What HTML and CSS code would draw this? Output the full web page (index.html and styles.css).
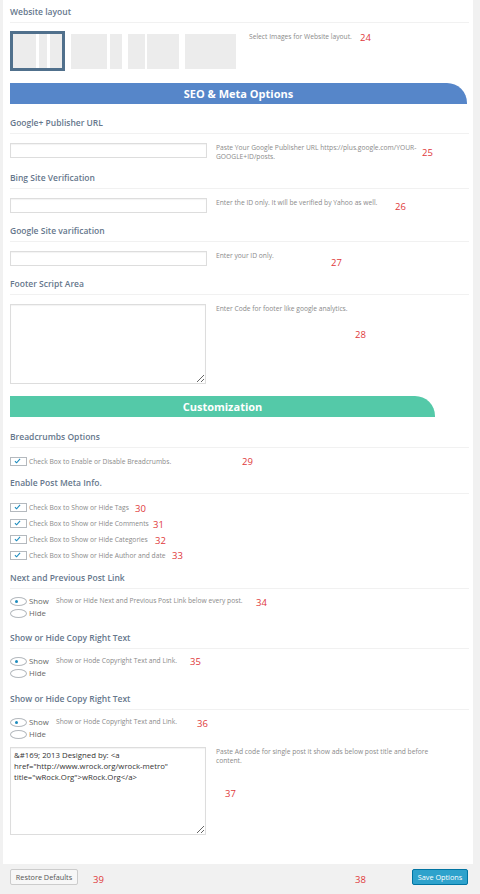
FILE: index.html
```html
<!DOCTYPE html>
<html lang="en">
<head>
    <meta charset="UTF-8">
    <meta name="viewport" content="width=device-width, initial-scale=1.0">
    <title>Theme Options</title>
    <link rel="stylesheet" href="styles.css">
</head>
<body>
    <div class="page">
        <div class="panel">
            <!-- Layout -->
            <div class="field field-layout">
                <div class="field-title">Website layout</div>
                <div class="field-row">
                    <div class="layouts">
                        <div class="layout selected l-1"><span></span><span></span><span></span></div>
                        <div class="layout l-2"><span></span><span></span></div>
                        <div class="layout l-3"><span></span><span></span></div>
                        <div class="layout l-4"><span></span></div>
                    </div>
                    <div class="desc desc-layout">Select Images for Website layout.</div>
                </div>
            </div>

            <div class="banner banner-seo">SEO &amp; Meta Options</div>

            <div class="field field-gplus">
                <div class="field-title">Google+ Publisher URL</div>
                <div class="field-row">
                    <div class="control"><input type="text" class="text-input"></div>
                    <div class="desc">Paste Your Google Publisher URL https://plus.google.com/YOUR-GOOGLE+ID/posts.</div>
                </div>
            </div>

            <div class="field">
                <div class="field-title">Bing Site Verification</div>
                <div class="field-row">
                    <div class="control"><input type="text" class="text-input"></div>
                    <div class="desc">Enter the ID only. It will be verified by Yahoo as well.</div>
                </div>
            </div>

            <div class="field">
                <div class="field-title">Google Site varification</div>
                <div class="field-row">
                    <div class="control"><input type="text" class="text-input"></div>
                    <div class="desc">Enter your ID only.</div>
                </div>
            </div>

            <div class="field field-footer-script">
                <div class="field-title">Footer Script Area</div>
                <div class="field-row">
                    <div class="control"><textarea class="text-area"></textarea></div>
                    <div class="desc">Enter Code for footer like google analytics.</div>
                </div>
            </div>

            <div class="banner banner-custom">Customization</div>

            <div class="field field-breadcrumbs">
                <div class="field-title compact">Breadcrumbs Options</div>
                <div class="check-row"><span class="checkbox"><svg viewBox="0 0 8 7" width="7" height="6"><path d="M1 3.8 L3 5.6 L7 1" fill="none" stroke="#1e8cbe" stroke-width="1.3"/></svg></span>Check Box to Enable or Disable Breadcrumbs.</div>
            </div>

            <div class="field field-meta">
                <div class="field-title compact">Enable Post Meta Info.</div>
                <div class="check-row"><span class="checkbox"><svg viewBox="0 0 8 7" width="7" height="6"><path d="M1 3.8 L3 5.6 L7 1" fill="none" stroke="#1e8cbe" stroke-width="1.3"/></svg></span>Check Box to Show or Hide Tags</div>
                <div class="check-row"><span class="checkbox"><svg viewBox="0 0 8 7" width="7" height="6"><path d="M1 3.8 L3 5.6 L7 1" fill="none" stroke="#1e8cbe" stroke-width="1.3"/></svg></span>Check Box to Show or Hide Comments</div>
                <div class="check-row"><span class="checkbox"><svg viewBox="0 0 8 7" width="7" height="6"><path d="M1 3.8 L3 5.6 L7 1" fill="none" stroke="#1e8cbe" stroke-width="1.3"/></svg></span>Check Box to Show or Hide Categories</div>
                <div class="check-row"><span class="checkbox"><svg viewBox="0 0 8 7" width="7" height="6"><path d="M1 3.8 L3 5.6 L7 1" fill="none" stroke="#1e8cbe" stroke-width="1.3"/></svg></span>Check Box to Show or Hide Author and date</div>
            </div>

            <div class="field field-radio">
                <div class="field-title radio-title">Next and Previous Post Link</div>
                <div class="radio-field">
                    <div class="radio-group">
                        <div class="radio-row"><span class="radio on"><i></i></span>Show</div>
                        <div class="radio-row"><span class="radio"></span>Hide</div>
                    </div>
                    <div class="desc desc-radio">Show or Hide Next and Previous Post Link below every post.</div>
                </div>
            </div>

            <div class="field field-radio field-copy">
                <div class="field-title radio-title">Show or Hide Copy Right Text</div>
                <div class="radio-field">
                    <div class="radio-group">
                        <div class="radio-row"><span class="radio on"><i></i></span>Show</div>
                        <div class="radio-row"><span class="radio"></span>Hide</div>
                    </div>
                    <div class="desc desc-radio">Show or Hode Copyright Text and Link.</div>
                </div>
            </div>

            <div class="field field-last">
                <div class="field-title radio-title">Show or Hide Copy Right Text</div>
                <div class="radio-field">
                    <div class="radio-group">
                        <div class="radio-row"><span class="radio on"><i></i></span>Show</div>
                        <div class="radio-row"><span class="radio"></span>Hide</div>
                    </div>
                    <div class="desc desc-radio">Show or Hode Copyright Text and Link.</div>
                </div>
                <div class="field-row ad-row">
                    <div class="control"><textarea class="text-area code-area">&amp;#169; 2013 Designed by: &lt;a href="http://www.wrock.org/wrock-metro" title="wRock.Org"&gt;wRock.Org&lt;/a&gt;</textarea></div>
                    <div class="desc">Paste Ad code for single post it show ads below post title and before content.</div>
                </div>
            </div>
        </div>

        <div class="footer">
            <div class="button button-secondary">Restore Defaults</div>
            <div class="button button-primary">Save Options</div>
        </div>

        <!-- annotation numbers -->
        <span class="marker m24">24</span>
        <span class="marker m25">25</span>
        <span class="marker m26">26</span>
        <span class="marker m27">27</span>
        <span class="marker m28">28</span>
        <span class="marker m29">29</span>
        <span class="marker m30">30</span>
        <span class="marker m31">31</span>
        <span class="marker m32">32</span>
        <span class="marker m33">33</span>
        <span class="marker m34">34</span>
        <span class="marker m35">35</span>
        <span class="marker m36">36</span>
        <span class="marker m37">37</span>
        <span class="marker m38">38</span>
        <span class="marker m39">39</span>
    </div>
</body>
</html>
```

FILE: styles.css
```css
/* General Styles */
body {
    margin: 0;
    padding: 0;
    background-color: #f1f1f1;
    font-family: "Open Sans", "Liberation Sans", sans-serif;
}
.page {
    position: relative;
    width: 480px;
    height: 894px;
    overflow: hidden;
}
.panel {
    margin-left: 3px;
    width: 470px;
    box-sizing: border-box;
    padding: 5px 4px 29px 7px;
    background-color: #FFFFFF;
}

/* Fields */
.field {
    margin-bottom: 11px;
}
.field-title {
    font-size: 8.5px;
    font-weight: 600;
    color: #66778c;
    line-height: 14px;
    padding-bottom: 3px;
    border-bottom: 1px solid #f1f1f1;
    margin-bottom: 9px;
}
.field-title.compact {
    margin-bottom: 5px;
}
.field-title.radio-title {
    margin-bottom: 6px;
}
.field-layout {
    margin-bottom: 12px;
}
.field-layout .field-title {
    margin-bottom: 8px;
}
.field-gplus {
    margin-bottom: 10px;
}
.field-footer-script {
    margin-bottom: 12px;
}
.field-breadcrumbs {
    margin-bottom: 7px;
}
.field-meta {
    margin-bottom: 8px;
}
.field-radio {
    margin-bottom: 12px;
}
.field-copy {
    margin-bottom: 13px;
}
.field-last {
    margin-bottom: 0;
}
.field-row {
    display: flex;
    align-items: flex-start;
}
.control {
    width: 197px;
    margin-right: 9px;
    flex-shrink: 0;
}
.desc {
    width: 218px;
    font-size: 6.7px;
    line-height: 9px;
    color: #8a8a8a;
}
.text-input {
    display: block;
    width: 197px;
    height: 15px;
    box-sizing: border-box;
    margin: 0;
    border: 1px solid #dddddd;
    box-shadow: inset 0 1px 1px rgba(0, 0, 0, 0.05);
}
.text-area {
    display: block;
    width: 196px;
    height: 80px;
    box-sizing: border-box;
    margin: 0;
    padding: 2px 3px;
    border: 1px solid #dddddd;
    box-shadow: inset 0 1px 1px rgba(0, 0, 0, 0.05);
    font-family: "Open Sans", sans-serif;
    font-size: 7.8px;
    line-height: 11px;
    color: #333333;
    resize: vertical;
}
.ad-row {
    margin-top: 7px;
}
.text-area.code-area {
    height: 88px;
}

/* Layout thumbnails */
.layouts {
    display: flex;
    align-items: center;
    gap: 6px;
    height: 40px;
    margin-right: 13px;
}
.layout {
    display: flex;
    gap: 3px;
    width: 51px;
    height: 35px;
}
.layout span {
    background-color: #ececec;
}
.layout.selected {
    width: 55px;
    height: 40px;
    box-sizing: border-box;
    border: 3px solid #50708c;
}
.l-1 span:nth-child(1) { width: 24px; }
.l-1 span:nth-child(2) { width: 8px; }
.l-1 span:nth-child(3) { width: 13px; }
.l-2 span:nth-child(1) { width: 36px; }
.l-2 span:nth-child(2) { width: 12px; }
.l-3 { gap: 2px; }
.l-3 span:nth-child(1) { width: 17px; }
.l-3 span:nth-child(2) { width: 32px; }
.l-4 span { width: 51px; }
.desc-layout {
    padding-top: 1px;
}

/* Section banners */
.banner {
    height: 21px;
    line-height: 21px;
    margin-bottom: 12px;
    text-align: center;
    color: #FFFFFF;
    font-size: 11px;
    font-weight: 700;
    border-top-right-radius: 20px;
}
.banner-seo {
    width: 457px;
    background-color: #5686c9;
}
.banner-custom {
    width: 425px;
    margin-bottom: 13px;
    background-color: #54c9a8;
}

/* Checkboxes */
.check-row {
    display: flex;
    align-items: center;
    height: 16px;
    font-size: 6.7px;
    color: #8a8a8a;
}
.checkbox {
    display: flex;
    align-items: center;
    width: 17px;
    height: 9px;
    box-sizing: border-box;
    margin-right: 2px;
    padding-left: 3px;
    border: 1px solid #b4b9be;
    background-color: #FFFFFF;
}

/* Radios */
.radio-field {
    display: flex;
    align-items: flex-start;
}
.radio-group {
    width: 46px;
}
.radio-row {
    display: flex;
    align-items: center;
    height: 12px;
    font-size: 7.8px;
    color: #666666;
}
.radio {
    display: flex;
    align-items: center;
    width: 17px;
    height: 9px;
    box-sizing: border-box;
    margin-right: 2px;
    padding-left: 4px;
    border: 1px solid #b4b9be;
    border-radius: 50%;
}
.radio i {
    display: block;
    width: 3px;
    height: 3px;
    border-radius: 50%;
    background-color: #1e8cbe;
}
.desc-radio {
    width: auto;
    margin-top: 1px;
}

/* Footer */
.footer {
    display: flex;
    justify-content: space-between;
    padding: 5px 12px 0 10px;
}
.button {
    height: 16px;
    line-height: 14px;
    box-sizing: border-box;
    padding: 0;
    font-size: 7.3px;
    white-space: nowrap;
    text-align: center;
    border-radius: 2px;
}
.button-secondary {
    width: 68px;
    color: #555555;
    background-color: #f7f7f7;
    border: 1px solid #cccccc;
}
.button-primary {
    width: 56px;
    color: #FFFFFF;
    background-color: #2ea2cc;
    border: 1px solid #0074a2;
}

/* Annotation numbers */
.marker {
    position: absolute;
    font-size: 9.5px;
    line-height: 10px;
    color: #e0383a;
}
.m24 { left: 360px; top: 33px; }
.m25 { left: 422px; top: 148px; }
.m26 { left: 395px; top: 202px; }
.m27 { left: 331px; top: 258px; }
.m28 { left: 355px; top: 330px; }
.m29 { left: 242px; top: 457px; }
.m30 { left: 135px; top: 504px; }
.m31 { left: 153px; top: 520px; }
.m32 { left: 155px; top: 536px; }
.m33 { left: 172px; top: 551px; }
.m34 { left: 256px; top: 598px; }
.m35 { left: 190px; top: 657px; }
.m36 { left: 197px; top: 719px; }
.m37 { left: 225px; top: 789px; }
.m38 { left: 355px; top: 875px; }
.m39 { left: 93px; top: 875px; }
```
